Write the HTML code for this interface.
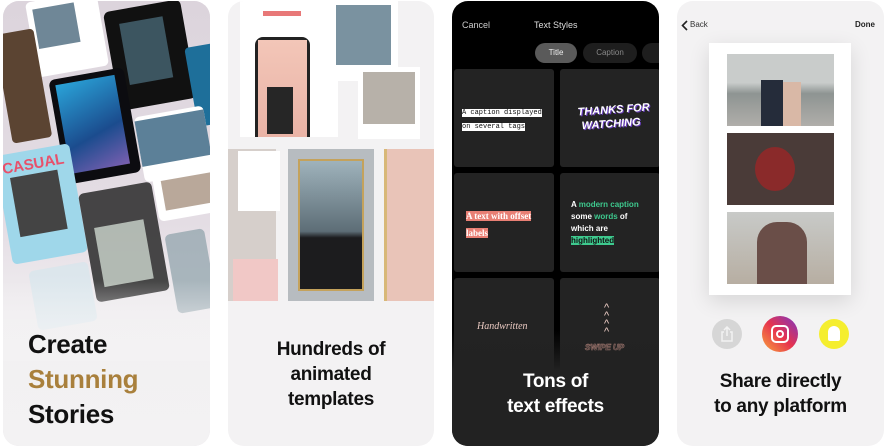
<!DOCTYPE html>
<html><head><meta charset="utf-8"><style>
*{margin:0;padding:0;box-sizing:border-box}
body{width:892px;height:448px;background:#fff;position:relative;overflow:hidden;font-family:"Liberation Sans",sans-serif}
.p{position:absolute;top:1px;height:445px;border-radius:16px;overflow:hidden}
.a{position:absolute}
.h{font-weight:bold;letter-spacing:-0.3px}
</style></head><body>

<!-- Panel 1 -->
<div class="p" style="left:3px;width:207px;background:#e6e0e6">
 <div class="a" style="left:0;top:0;width:207px;height:445px;background:linear-gradient(180deg,#dcd4dc 0%,#e4dde4 50%,#f2f0f2 72%,#f3f2f3 100%)"></div>
 <div class="a" style="left:28px;top:-5px;width:72px;height:76px;background:#fff;border-radius:5px;transform:rotate(-10deg)"><div class="a" style="left:6px;top:8px;width:42px;height:40px;background:#6f8797"></div></div>
 <div class="a" style="left:0;top:30px;width:40px;height:110px;background:#5b4432;border-radius:4px;transform:rotate(-10deg)"></div>
 <div class="a" style="left:108px;top:4px;width:78px;height:100px;background:#111;border-radius:6px;transform:rotate(-10deg)"><div class="a" style="left:14px;top:14px;width:44px;height:62px;background:#3c5560"></div></div>
 <div class="a" style="left:54px;top:72px;width:76px;height:106px;background:#0c0c10;border-radius:6px;transform:rotate(-10deg)"><div class="a" style="left:6px;top:6px;width:60px;height:90px;background:linear-gradient(160deg,#2aa3d8,#1b4c8e 60%,#7a5fb0)"></div></div>
 <div class="a" style="left:188px;top:44px;width:30px;height:80px;background:#1e6f9a;border-radius:4px;transform:rotate(-10deg)"></div>
 <div class="a" style="left:136px;top:110px;width:70px;height:66px;background:#fff;border-radius:5px;transform:rotate(-10deg)"><div class="a" style="left:0;top:4px;width:70px;height:46px;background:#5c8098"></div></div>
 <div class="a" style="left:152px;top:166px;width:60px;height:50px;background:#fff;border-radius:5px;transform:rotate(-10deg)"><div class="a" style="left:8px;top:10px;width:52px;height:30px;background:#b9a89a"></div></div>
 <div class="a" style="left:0;top:148px;width:76px;height:110px;background:#9fd7ea;border-radius:5px;transform:rotate(-10deg)"><div class="a" style="left:6px;top:6px;font-size:15px;font-weight:bold;color:#e8506a">CASUAL</div><div class="a" style="left:12px;top:24px;width:48px;height:60px;background:#444"></div></div>
 <div class="a" style="left:84px;top:186px;width:74px;height:110px;background:#2a2a2a;border-radius:5px;transform:rotate(-10deg);opacity:.85"><div class="a" style="left:10px;top:36px;width:50px;height:60px;background:#a9b3aa"></div></div>
 <div class="a" style="left:168px;top:230px;width:40px;height:80px;background:#8ca0a8;border-radius:5px;transform:rotate(-10deg);opacity:.7"></div>
 <div class="a" style="left:30px;top:265px;width:60px;height:60px;background:#cde6ee;border-radius:5px;transform:rotate(-10deg);opacity:.5"></div>
 <div class="a" style="left:0;top:280px;width:207px;height:80px;background:linear-gradient(180deg,rgba(243,242,243,0),#f3f2f3)"></div>
 <div class="a h" style="left:25px;top:326px;font-size:26px;line-height:35px;color:#111">Create<br><span style="color:#a9803c">Stunning</span><br>Stories</div>
</div>

<!-- Panel 2 -->
<div class="p" style="left:228px;width:206px;background:#f3f2f3">
 <div class="a" style="left:12px;top:0;width:98px;height:136px;background:#fff"></div>
 <div class="a" style="left:35px;top:10px;width:38px;height:5px;background:#e87878"></div>
 <div class="a" style="left:27px;top:36px;width:55px;height:100px;background:#222;border-radius:8px 8px 0 0"><div class="a" style="left:3px;top:3px;width:49px;height:97px;background:linear-gradient(#f3c6b8,#e9b3a6)"></div><div class="a" style="left:12px;top:50px;width:26px;height:47px;background:#262626"></div></div>
 <div class="a" style="left:108px;top:0;width:62px;height:80px;background:#fff"><div class="a" style="left:0;top:4px;width:55px;height:60px;background:#7a92a0"></div></div>
 <div class="a" style="left:130px;top:66px;width:62px;height:72px;background:#fff"><div class="a" style="left:5px;top:5px;width:52px;height:52px;background:#b7b1a9"></div></div>
 <div class="a" style="left:0;top:148px;width:48px;height:152px;background:#d6cfcb"></div>
 <div class="a" style="left:10px;top:150px;width:42px;height:60px;background:#fff"></div>
 <div class="a" style="left:5px;top:258px;width:45px;height:42px;background:#f1c8c6"></div>
 <div class="a" style="left:60px;top:148px;width:86px;height:152px;background:#b7bcc0"><div class="a" style="left:10px;top:10px;width:66px;height:132px;border:2px solid #c4a25c;background:linear-gradient(#9fb3bc,#5d6d76 55%,#1c1c1e 60%)"></div></div>
 <div class="a" style="left:156px;top:148px;width:50px;height:152px;background:#e9c4b8;border-left:3px solid #d8b878"></div>
 <div class="a h" style="left:0;width:206px;top:336px;text-align:center;font-size:19px;line-height:25px;color:#111">Hundreds of<br>animated<br>templates</div>
</div>

<!-- Panel 3 -->
<div class="p" style="left:452px;width:207px;background:#000">
 <div class="a" style="left:10px;top:19px;font-size:9px;color:#ccc">Cancel</div>
 <div class="a" style="left:82px;top:19px;font-size:9px;color:#ddd">Text Styles</div>
 <div class="a" style="left:83px;top:42px;width:42px;height:20px;border-radius:10px;background:#5a5a5a;color:#eee;font-size:8px;text-align:center;line-height:20px">Title</div>
 <div class="a" style="left:131px;top:42px;width:54px;height:20px;border-radius:10px;background:#1e1e1e;color:#888;font-size:8px;text-align:center;line-height:20px">Caption</div>
 <div class="a" style="left:190px;top:42px;width:30px;height:20px;border-radius:10px;background:#1e1e1e"></div>
 <div class="a" style="left:2px;top:68px;width:100px;height:98px;background:#232323;border-radius:3px"></div>
 <div class="a" style="left:108px;top:68px;width:100px;height:98px;background:#232323;border-radius:3px"></div>
 <div class="a" style="left:2px;top:172px;width:100px;height:99px;background:#232323;border-radius:3px"></div>
 <div class="a" style="left:108px;top:172px;width:100px;height:99px;background:#232323;border-radius:3px"></div>
 <div class="a" style="left:2px;top:277px;width:100px;height:100px;background:#232323;border-radius:3px"></div>
 <div class="a" style="left:108px;top:277px;width:100px;height:100px;background:#232323;border-radius:3px"></div>
 <div class="a" style="left:10px;top:105px;font-family:'Liberation Mono',monospace;font-size:7px;line-height:14px;color:#111"><span style="background:#fff">A caption displayed</span><br><span style="background:#fff">on several tags</span></div>
 <div class="a" style="left:126px;top:102px;font-size:11px;line-height:14px;font-weight:bold;font-style:italic;color:#fff;text-shadow:1px 1px 0 #6a3fc0;transform:rotate(-4deg)">THANKS FOR<br>&nbsp;WATCHING</div>
 <div class="a" style="left:14px;top:207px;font-family:'Liberation Serif',serif;font-size:9px;line-height:17px;font-weight:bold;color:#fff"><span style="background:#e87f74">A text with offset</span><br><span style="background:#e87f74">labels</span></div>
 <div class="a" style="left:119px;top:198px;font-size:8px;line-height:12px;font-weight:bold;color:#fff">A <span style="color:#3ec98e">modern caption</span><br>some <span style="color:#3ec98e">words</span> of<br>which are<br><span style="background:#3ec98e;color:#111">highlighted</span></div>
 <div class="a" style="left:25px;top:320px;font-family:'Liberation Serif',serif;font-style:italic;font-size:10px;color:#e8c8c0">Handwritten</div>
 <div class="a" style="left:152px;top:303px;color:#f0d0c8;font-size:11px;line-height:8px;text-align:center">^<br>^<br>^<br>^</div>
 <div class="a" style="left:133px;top:342px;font-size:8px;font-weight:bold;font-style:italic;color:#222;-webkit-text-stroke:0.6px #e8a89c">SWIPE UP</div>
 <div class="a" style="left:0;top:330px;width:207px;height:115px;background:linear-gradient(180deg,rgba(34,34,34,0),#222 35%)"></div>
 <div class="a h" style="left:0;width:207px;top:368px;text-align:center;font-size:19px;line-height:25px;color:#fff">Tons of<br>text effects</div>
</div>

<!-- Panel 4 -->
<div class="p" style="left:677px;width:207px;background:#f3f2f3">
 <svg class="a" style="left:4px;top:19px" width="7" height="11" viewBox="0 0 7 11"><path d="M6 1L1.5 5.5L6 10" stroke="#222" stroke-width="1.6" fill="none"/></svg>
 <div class="a" style="left:13px;top:19px;font-size:8px;color:#333">Back</div>
 <div class="a" style="left:178px;top:19px;font-size:8px;font-weight:bold;color:#222">Done</div>
 <div class="a" style="left:32px;top:42px;width:142px;height:252px;background:#fff;box-shadow:0 6px 20px rgba(0,0,0,.12)"></div>
 <div class="a" style="left:50px;top:53px;width:107px;height:72px;background:linear-gradient(#c9cccb 40%,#8e9492 55%,#b0aeaa)"><div class="a" style="left:34px;top:26px;width:22px;height:46px;background:#252c3a"></div><div class="a" style="left:56px;top:28px;width:18px;height:44px;background:#d9b8a6"></div></div>
 <div class="a" style="left:50px;top:132px;width:107px;height:72px;background:#4a3b38"><div class="a" style="left:28px;top:14px;width:40px;height:44px;border-radius:50%;background:#8a2a2a"></div></div>
 <div class="a" style="left:50px;top:211px;width:107px;height:72px;background:linear-gradient(#c8cac8,#b7aea2)"><div class="a" style="left:30px;top:10px;width:50px;height:62px;background:#6a4e48;border-radius:20px 20px 0 0"></div></div>
 <div class="a" style="left:35px;top:318px;width:30px;height:30px;border-radius:50%;background:#d6d6d6"><svg class="a" style="left:8px;top:7px" width="14" height="16" viewBox="0 0 14 16"><path d="M4 6H2v9h10V6h-2M7 1v9M4 4l3-3 3 3" stroke="#f2f2f2" stroke-width="1.5" fill="none"/></svg></div>
 <div class="a" style="left:85px;top:315px;width:36px;height:36px;border-radius:50%;background:linear-gradient(45deg,#f9a43a,#e6334f 50%,#7b36c4)"><div class="a" style="left:9px;top:9px;width:18px;height:18px;border:2px solid #fff;border-radius:5px"></div><div class="a" style="left:14px;top:14px;width:8px;height:8px;border:2px solid #fff;border-radius:50%"></div></div>
 <div class="a" style="left:142px;top:318px;width:30px;height:30px;border-radius:50%;background:#f5ee2e"><div class="a" style="left:9px;top:7px;width:12px;height:15px;background:#fff;border-radius:6px 6px 2px 2px"></div></div>
 <div class="a h" style="left:0;width:207px;top:368px;text-align:center;font-size:19px;line-height:25px;color:#111">Share directly<br>to any platform</div>
</div>
</body></html>
